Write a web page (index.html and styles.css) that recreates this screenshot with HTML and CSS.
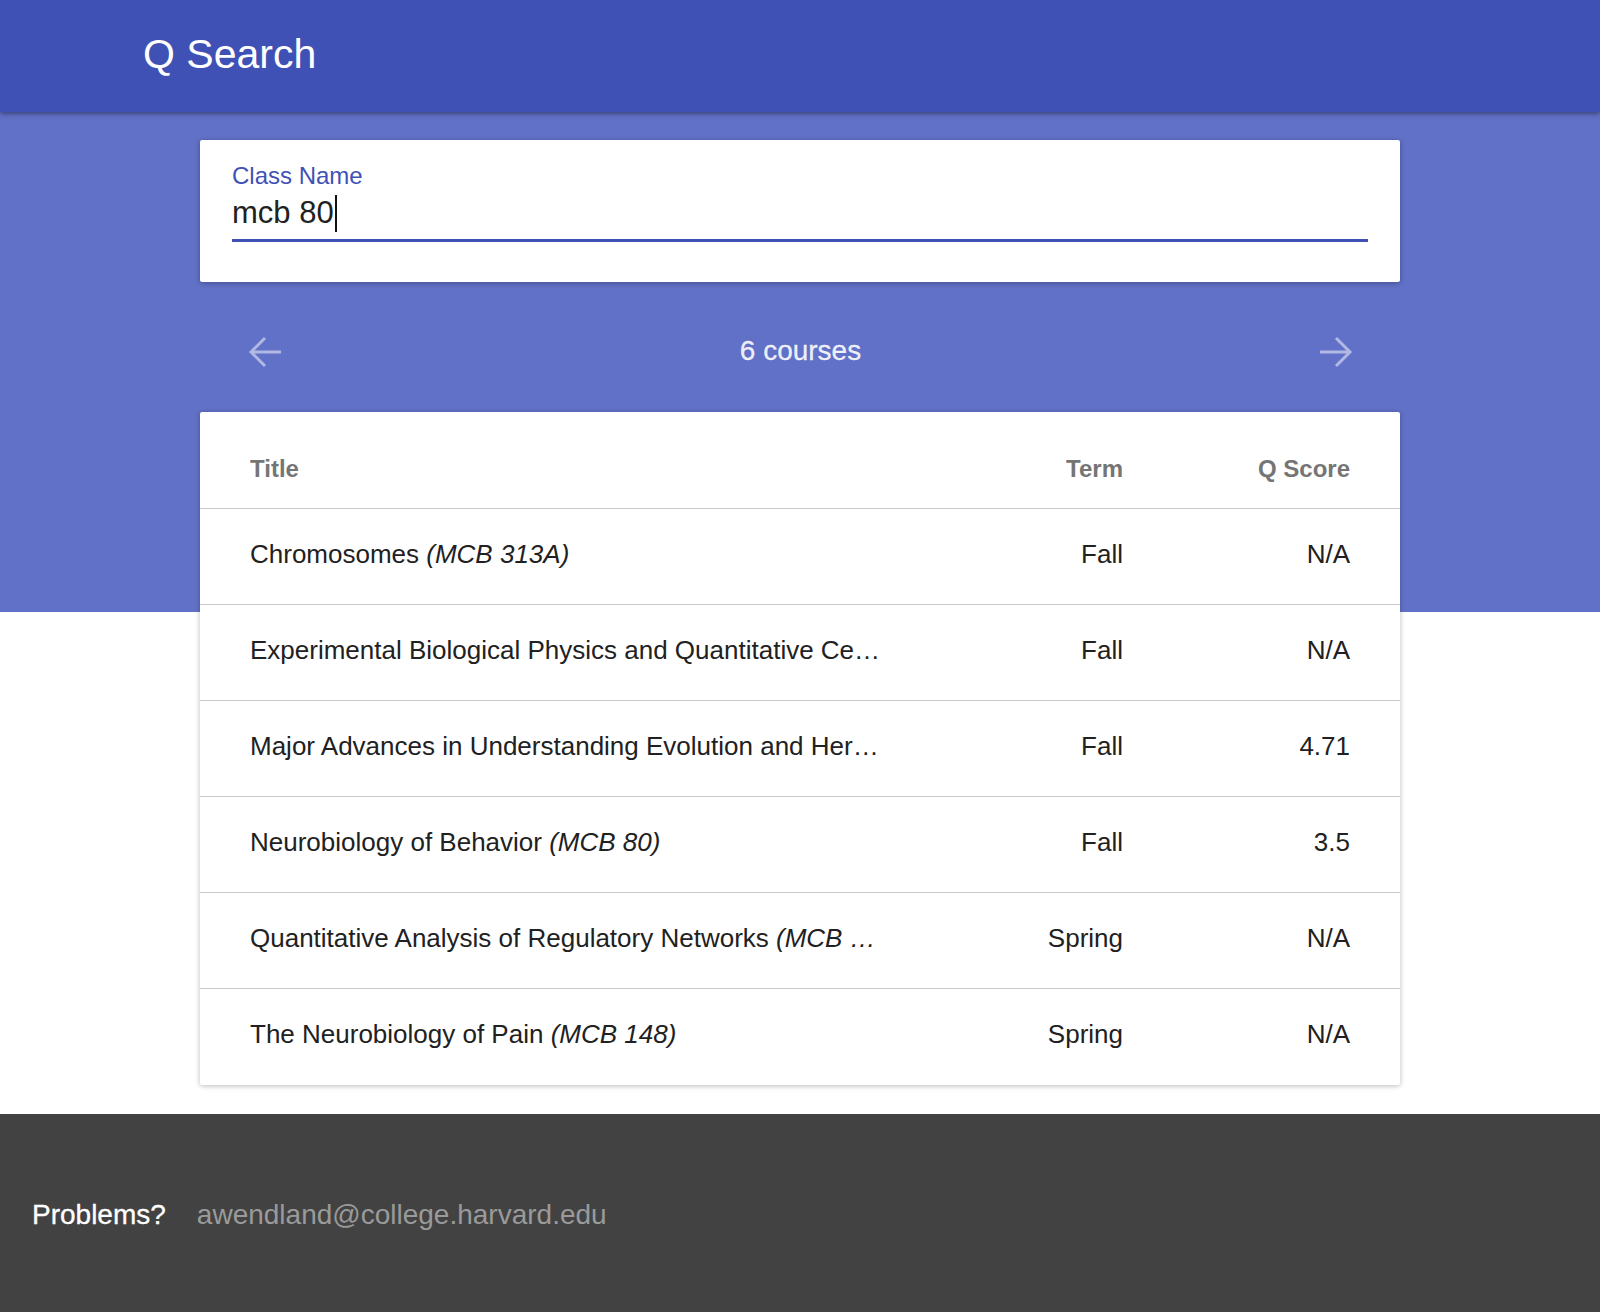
FILE: index.html
```html
<!DOCTYPE html>
<html lang="en">
<head>
<meta charset="utf-8">
<title>Q Search</title>
<link rel="stylesheet" href="styles.css">
</head>
<body>
<header class="app-bar">
  <h1 class="app-title">Q Search</h1>
</header>
<main class="main">
  <section class="search-card">
    <div class="field-label">Class Name</div>
    <div class="field-input"><span class="field-value">mcb 80</span><span class="caret"></span></div>
    <div class="field-underline"></div>
  </section>
  <nav class="pager">
    <span class="pager-btn" aria-label="Previous page">
      <svg class="arrow" viewBox="0 0 34 32" width="34" height="32"><path d="M33 16H4M17 2L3 16l14 14"/></svg>
    </span>
    <span class="pager-count">6 courses</span>
    <span class="pager-btn" aria-label="Next page">
      <svg class="arrow" viewBox="0 0 34 32" width="34" height="32"><path d="M1 16h29M17 2l14 14-14 14"/></svg>
    </span>
  </nav>
  <section class="results">
    <div class="row row-head">
      <div class="cell cell-title">Title</div>
      <div class="cell cell-term">Term</div>
      <div class="cell cell-score">Q Score</div>
    </div>
    <div class="row">
      <div class="cell cell-title">Chromosomes <em>(MCB 313A)</em></div>
      <div class="cell cell-term">Fall</div>
      <div class="cell cell-score">N/A</div>
    </div>
    <div class="row">
      <div class="cell cell-title">Experimental Biological Physics and Quantitative Ce…</div>
      <div class="cell cell-term">Fall</div>
      <div class="cell cell-score">N/A</div>
    </div>
    <div class="row">
      <div class="cell cell-title">Major Advances in Understanding Evolution and Her…</div>
      <div class="cell cell-term">Fall</div>
      <div class="cell cell-score">4.71</div>
    </div>
    <div class="row">
      <div class="cell cell-title">Neurobiology of Behavior <em>(MCB 80)</em></div>
      <div class="cell cell-term">Fall</div>
      <div class="cell cell-score">3.5</div>
    </div>
    <div class="row">
      <div class="cell cell-title">Quantitative Analysis of Regulatory Networks <em>(MCB …</em></div>
      <div class="cell cell-term">Spring</div>
      <div class="cell cell-score">N/A</div>
    </div>
    <div class="row">
      <div class="cell cell-title">The Neurobiology of Pain <em>(MCB 148)</em></div>
      <div class="cell cell-term">Spring</div>
      <div class="cell cell-score">N/A</div>
    </div>
  </section>
</main>
<footer class="footer">
  <span class="footer-label">Problems?</span>
  <a class="footer-mail" href="mailto:awendland@college.harvard.edu">awendland@college.harvard.edu</a>
</footer>
</body>
</html>
```

FILE: styles.css
```css
* {
  box-sizing: border-box;
}

html, body {
  margin: 0;
  padding: 0;
}

body {
  font-family: "Liberation Sans", Arial, Helvetica, sans-serif;
  color: #212121;
  background: #fff;
}

.app-bar {
  position: relative;
  z-index: 2;
  height: 112px;
  background: #3f51b5;
  display: flex;
  align-items: center;
  padding: 0 0 4px 143px;
  box-shadow: 0 2px 6px rgba(0, 0, 0, 0.28), 0 1px 3px rgba(0, 0, 0, 0.2);
}

.app-title {
  margin: 0;
  font-size: 41px;
  line-height: 41px;
  font-weight: 400;
  color: #fff;
}

.main {
  background: linear-gradient(to bottom, #6171c7 0, #6171c7 500px, #fff 500px);
  padding: 28px 200px 29px;
}

.search-card {
  background: #fff;
  border-radius: 2px;
  padding: 24px 32px 40px;
  box-shadow: 0 1px 6px rgba(0, 0, 0, 0.16), 0 1px 4px rgba(0, 0, 0, 0.16);
}

.field-label {
  font-size: 24px;
  line-height: 24px;
  color: #3f51b5;
}

.field-input {
  margin-top: 5px;
  height: 40px;
  font-size: 31px;
  line-height: 40px;
  color: #212121;
  display: flex;
  align-items: center;
}

.caret {
  display: inline-block;
  width: 2px;
  height: 37px;
  margin-left: 1px;
  background: #111;
}

.field-underline {
  margin-top: 6px;
  height: 3px;
  background: #3f51b5;
}

.pager {
  height: 130px;
  padding: 10px 47px 0 48px;
  display: flex;
  align-items: center;
  justify-content: space-between;
}

.pager-btn {
  display: flex;
  width: 34px;
  height: 32px;
  color: rgba(255, 255, 255, 0.5);
}

.arrow {
  display: block;
  fill: none;
  stroke: currentColor;
  stroke-width: 3;
}

.pager-count {
  font-size: 28px;
  line-height: 32px;
  padding-bottom: 2px;
  color: rgba(255, 255, 255, 0.88);
  -webkit-text-stroke: 0.3px rgba(255, 255, 255, 0.88);
}

.results {
  background: #fff;
  border-radius: 2px;
  box-shadow: 0 1px 6px rgba(0, 0, 0, 0.14), 0 1px 4px rgba(0, 0, 0, 0.14);
}

.row {
  display: grid;
  grid-template-columns: 632px 1fr 227px;
  align-items: center;
  height: 96px;
  padding: 0 50px 6px;
  border-bottom: 1px solid #c8c8c8;
  font-size: 26px;
  line-height: 32px;
  color: #212121;
}

.row:last-child {
  border-bottom: none;
}

.row-head {
  height: 97px;
  padding: 17px 50px 0;
  font-size: 24px;
  line-height: 30px;
  font-weight: 700;
  color: #757575;
}

.cell {
  white-space: nowrap;
}

.cell-term,
.cell-score {
  text-align: right;
}

.cell em {
  font-style: italic;
}

.footer {
  height: 198px;
  background: #424242;
  display: flex;
  align-items: center;
  padding: 4px 0 0 32px;
  font-size: 28px;
  line-height: 32px;
}

.footer-label {
  color: #fff;
  -webkit-text-stroke: 0.3px #fff;
}

.footer-mail {
  margin-left: 31px;
  color: #9a9a9a;
  text-decoration: none;
}
```
